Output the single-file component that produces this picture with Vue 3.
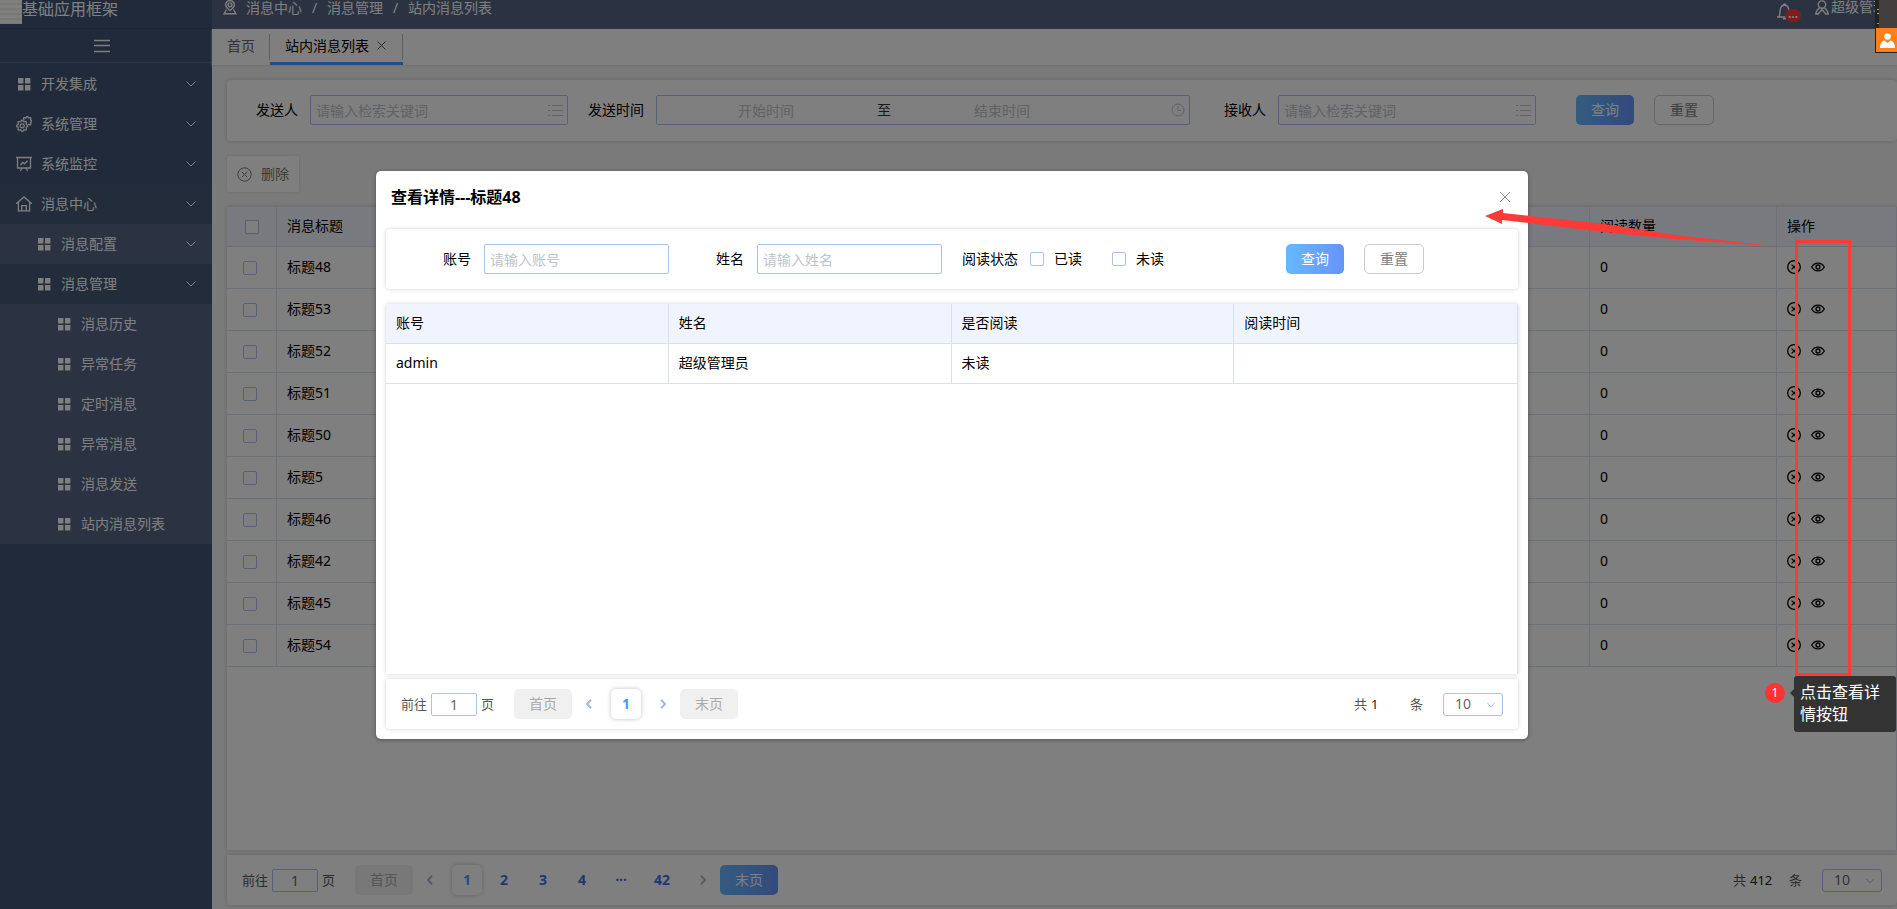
<script setup>
import { ref } from 'vue'

const menu = [
  { label: '开发集成', icon: 'grid', level: 1, arrow: true },
  { label: '系统管理', icon: 'gear', level: 1, arrow: true },
  { label: '系统监控', icon: 'board', level: 1, arrow: true },
  { label: '消息中心', icon: 'home', level: 1, arrow: true, open: true },
  { label: '消息配置', icon: 'grid', level: 2, arrow: true },
  { label: '消息管理', icon: 'grid', level: 2, arrow: true, open: true },
  { label: '消息历史', icon: 'grid', level: 3 },
  { label: '异常任务', icon: 'grid', level: 3 },
  { label: '定时消息', icon: 'grid', level: 3 },
  { label: '异常消息', icon: 'grid', level: 3 },
  { label: '消息发送', icon: 'grid', level: 3 },
  { label: '站内消息列表', icon: 'grid', level: 3 },
]
const rows = ['标题48', '标题53', '标题52', '标题51', '标题50', '标题5', '标题46', '标题42', '标题45', '标题54']
const pages = ['2', '3', '4', '···', '42']
const jump = ref('1')
const dialogJump = ref('1')

// Outline of a rounded cog, from one angle to another (degrees)
function cog(cx, cy, r, from, to) {
  const pts = []
  for (let a = from; a <= to; a += 5) {
    const t = (a * Math.PI) / 180
    const d = r + 0.7 * Math.cos(8 * t)
    pts.push(`${(cx + d * Math.cos(t)).toFixed(2)} ${(cy + d * Math.sin(t)).toFixed(2)}`)
  }
  return 'M' + pts.join('L')
}
const frontCog = cog(6.2, 9.8, 5, 0, 360)
const backCog = cog(11.2, 5.2, 4.2, -165, 75)
</script>

<template>
  <div class="app">
    <aside class="sidebar">
      <div class="brand"><span class="logo"></span><span>基础应用框架</span></div>
      <button class="fold" aria-label="折叠菜单">
        <svg width="16" height="14" viewBox="0 0 16 14"><path d="M0 1.500h16M0 6.500h16M0 12.500h16" /></svg>
      </button>
      <nav>
        <a v-for="m in menu" :key="m.label" href="#" class="item" :class="['lv' + m.level, { open: m.open }]">
          <svg v-if="m.icon === 'grid'" class="mi" viewBox="0 0 16 16"><path class="solid" d="M2 2h5.400v5.400H2zM9 2h5.400v5.400H9zM2 9h5.400v5.400H2zM9 9h5.400v5.400H9z" /></svg>
          <svg v-else-if="m.icon === 'gear'" class="mi" viewBox="0 0 16 16"><path :d="frontCog" /><circle cx="6.200" cy="9.800" r="2" /><path :d="backCog" /></svg>
          <svg v-else-if="m.icon === 'board'" class="mi" viewBox="0 0 16 16"><path d="M0 1.500h16M1.500 1.500v10.500h13V1.500M4.500 9l2.300-2.500 1.700 1.300L11.600 4.700M6.300 12l-2 3M9.700 12l2 3" /></svg>
          <svg v-else class="mi" viewBox="0 0 16 16"><path d="M0 7.800L8 .9l8 6.900M2.400 6.300v8.600h11.200V6.300M5.700 14.700V9.600h4.600v5.100" /></svg>
          <span class="txt">{{ m.label }}</span>
          <svg v-if="m.arrow" class="caret" width="10" height="6" viewBox="0 0 10 6"><path d="M.5.500L5 5l4.500-4.500" /></svg>
        </a>
      </nav>
    </aside>

    <div class="main">
      <header class="top">
        <svg class="pin" width="14" height="15" viewBox="0 0 14 15"><circle cx="7" cy="4.800" r="1.900" /><path d="M7 10.500C4.500 8.600 2.700 6.900 2.700 4.800a4.300 4.300 0 0 1 8.600 0c0 2.100-1.800 3.800-4.300 5.700zM3.500 9.500L1 13.800h12l-2.500-4.300" /></svg>
        <span>消息中心</span><i>/</i><span>消息管理</span><i>/</i><span>站内消息列表</span>
        <div class="user">
          <button class="bell" aria-label="通知">
            <svg width="15" height="17" viewBox="0 0 15 17"><path d="M0 14h13M2 14c1-2 .8-4.500 1.200-7C3.600 4.200 5 2.300 7.500 2.300s4 1.900 4.300 4.700c.2 2 0 4.500 1.200 7M6.300 2.300c0-1.700 2.400-1.700 2.400 0M6 15.700h3" /></svg>
            <b>...</b>
          </button>
          <svg class="avatar" width="14" height="15" viewBox="0 0 14 15"><circle cx="7" cy="4.600" r="3.700" /><path d="M4.500 8C2.300 9.500 1 11.500.8 14h2.400L7 9.500l3.800 4.500h2.400C13 11.500 11.700 9.500 9.500 8" /></svg>
          <span>超级管理员</span>
        </div>
      </header>

      <nav class="tabs">
        <a href="#">首页</a>
        <a href="#" class="on">站内消息列表
          <svg width="9" height="9" viewBox="0 0 9 9"><path d="M.5.500l8 8M8.500.500l-8 8" /></svg>
        </a>
      </nav>

      <form class="card search" @submit.prevent>
        <label for="sender">发送人</label>
        <div class="field w1"><input id="sender" placeholder="请输入检索关键词" /><svg width="15" height="13" viewBox="0 0 15 13"><path d="M4 1.500h11M4 6.500h11M4 11.500h11M0 1.500h2M0 6.500h2M0 11.500h2" /></svg></div>
        <label for="start" class="ml">发送时间</label>
        <div class="field range"><input id="start" placeholder="开始时间" /><span>至</span><input aria-label="结束时间" placeholder="结束时间" /><svg width="14" height="14" viewBox="0 0 14 14"><circle cx="7" cy="7" r="6" /><path d="M7 3v4.500h3" /></svg></div>
        <label for="receiver" class="ml wide">接收人</label>
        <div class="field w1"><input id="receiver" placeholder="请输入检索关键词" /><svg width="15" height="13" viewBox="0 0 15 13"><path d="M4 1.500h11M4 6.500h11M4 11.500h11M0 1.500h2M0 6.500h2M0 11.500h2" /></svg></div>
        <button class="btn primary q">查询</button><button class="btn plain" type="reset">重置</button>
      </form>

      <button class="del">
        <svg width="15" height="15" viewBox="0 0 15 15"><circle cx="7.500" cy="7.500" r="6.700" /><path d="M4.800 4.800l5.400 5.400M10.200 4.800l-5.400 5.400" /></svg>删除
      </button>

      <section class="panel list">
        <table>
          <colgroup><col class="c-check" /><col /><col class="c-count" /><col class="c-op" /></colgroup>
          <thead><tr><th class="ck head"><input type="checkbox" aria-label="全选" /></th><th>消息标题</th><th>阅读数量</th><th>操作</th></tr></thead>
          <tbody>
            <tr v-for="r in rows" :key="r">
              <td class="ck"><input type="checkbox" :aria-label="r" /></td>
              <td>{{ r }}</td>
              <td>0</td>
              <td>
                <div class="ops">
                  <button aria-label="删除"><svg width="14" height="14" viewBox="0 0 14 14"><circle cx="7" cy="7" r="6.300" /><path d="M4.600 4.600l4.800 4.800M9.400 4.600L4.600 9.400" /></svg></button>
                  <button aria-label="查看"><svg width="14" height="14" viewBox="0 0 14 14"><path d="M.7 7C3.500 1.800 10.500 1.800 13.300 7 10.500 12.200 3.500 12.200.7 7z" /><circle cx="7" cy="7" r="2" /></svg></button>
                </div>
              </td>
            </tr>
          </tbody>
        </table>
      </section>

      <footer class="pager">
        <label for="jump">前往</label><input id="jump" v-model="jump" /><span>页</span>
        <button class="btn off first">首页</button>
        <button class="step" aria-label="上一页"><svg width="6" height="10" viewBox="0 0 6 10"><path d="M5 .8L1 5l4 4.200" /></svg></button>
        <button class="num on">1</button>
        <button v-for="p in pages" :key="p" class="num" :class="{ last: p === '42' }">{{ p }}</button>
        <button class="step" aria-label="下一页"><svg width="6" height="10" viewBox="0 0 6 10"><path d="M1 .8L5 5 1 9.200" /></svg></button>
        <button class="btn primary">末页</button>
        <div class="total"><span>共</span><em>412</em><span>条</span></div>
        <div class="size"><select aria-label="每页条数"><option>10</option></select><svg width="8" height="6" viewBox="0 0 8 6"><path d="M.5 1L4 5l3.500-4" /></svg></div>
      </footer>
    </div>

    <div class="mask">
      <section class="dialog" role="dialog" aria-labelledby="dlg-title">
        <header class="dhead">
          <h2 id="dlg-title">查看详情---标题48</h2>
          <button aria-label="关闭"><svg width="12" height="12" viewBox="0 0 12 12"><path d="M1 1l10 10M11 1L1 11" /></svg></button>
        </header>
        <form class="card dsearch" @submit.prevent>
          <label for="acc">账号</label><div class="field"><input id="acc" placeholder="请输入账号" /></div>
          <label for="nm" class="second">姓名</label><div class="field"><input id="nm" placeholder="请输入姓名" /></div>
          <span class="state">阅读状态</span>
          <label class="tick"><input type="checkbox" />已读</label>
          <label class="tick"><input type="checkbox" />未读</label>
          <button class="btn primary q">查询</button><button class="btn plain" type="reset">重置</button>
        </form>
        <div class="panel detail">
          <table>
            <thead><tr><th>账号</th><th>姓名</th><th>是否阅读</th><th>阅读时间</th></tr></thead>
            <tbody><tr><td>admin</td><td>超级管理员</td><td>未读</td><td></td></tr></tbody>
          </table>
        </div>
        <footer class="pager">
          <label for="djump">前往</label><input id="djump" v-model="dialogJump" /><span>页</span>
          <button class="btn off first">首页</button>
          <button class="step" aria-label="上一页"><svg width="6" height="10" viewBox="0 0 6 10"><path d="M5 .8L1 5l4 4.200" /></svg></button>
          <button class="num on">1</button>
          <button class="step" aria-label="下一页"><svg width="6" height="10" viewBox="0 0 6 10"><path d="M1 .8L5 5 1 9.200" /></svg></button>
          <button class="btn off">末页</button>
          <div class="total"><span>共</span><em>1</em><span>条</span></div>
          <div class="size"><select aria-label="每页条数"><option>10</option></select><svg width="8" height="6" viewBox="0 0 8 6"><path d="M.5 1L4 5l3.500-4" /></svg></div>
        </footer>
      </section>
    </div>

    <div class="frame"></div>
    <svg class="arrow" width="294" height="42" viewBox="0 0 294 42"><path d="M0 8L18 1v4L120 16 190 27 292 38.500 188 31 118 24 17 12v4z" /></svg>
    <span class="badge">1</span>
    <div class="tip">点击查看详情按钮</div>
    <div class="widget">
      <div class="shade"><i></i></div>
      <div class="person"><svg width="15" height="15" viewBox="0 0 15 15"><circle cx="7.500" cy="3.500" r="3.300" /><path d="M0 15c0-4.500 2-6.800 4.500-7.500L7.500 10l3-2.500C13 8.200 15 10.500 15 15z" /></svg></div>
    </div>
  </div>
</template>

<style>
html, body { margin: 0; }
body { overflow: hidden; }
</style>

<style scoped>
* { box-sizing: border-box; }
.app { position: relative; display: flex; height: 100vh; overflow: hidden; font: 14px/20px "Noto Sans", "Noto Sans CJK SC", sans-serif; color: #000; background: #f4f4f4; }
button, input, select { font: inherit; margin: 0; padding: 0; border: 0; background: none; color: inherit; }
a { color: inherit; text-decoration: none; }
svg { display: block; flex: none; fill: none; stroke: currentColor; stroke-width: 1; }

.sidebar { flex: 0 0 212px; background: #405475; color: #fff; }
.brand { display: flex; height: 29px; font-size: 16px; line-height: 18px; border-bottom: 1px solid #384b69; }
.logo { width: 22px; height: 24px; background: repeating-linear-gradient(#fff 0 3px, #f0f0ec 3px 5px); }
.fold { display: flex; width: 100%; height: 34px; align-items: center; justify-content: center; padding-right: 8px; border-bottom: 1px solid #536789; }
.fold svg { stroke-width: 1.4; }
.item { display: flex; align-items: center; height: 40px; padding: 0 16px; }
.sidebar nav { padding-top: 1px; }
.item .mi { width: 16px; height: 16px; margin-right: 9px; stroke-width: 1.3; }
.mi .solid { fill: #fff; stroke: none; }
.item.lv2 { padding-left: 36px; background: #566484; }
.item.lv3 { padding-left: 56px; background: #566484; }
.item.open { background: #465876; }
.caret { margin-left: auto; }

.main { flex: 1; min-width: 0; display: flex; flex-direction: column; }
.top { display: flex; align-items: flex-start; height: 29px; padding-left: 11px; background: #566684; color: #fff; line-height: 16px; flex: none; }
.top svg { stroke-width: 1.4; }
.top i { width: 25px; text-align: center; font-style: normal; }
.pin { margin-right: 9px; }
.user { margin-left: auto; display: flex; width: 120px; overflow: hidden; white-space: nowrap; height: 29px; line-height: 13px; }
.user > span { flex: none; }
.bell { position: relative; width: 24px; height: 22px; flex: none; margin-right: 14px; }
.bell b { position: absolute; left: 8px; top: 9px; width: 16px; height: 13px; border-radius: 7px; background: #f83c3c; font-size: 12px; line-height: 9px; }
.avatar { margin-right: 2px; }
.tabs { display: flex; height: 36px; flex: none; background: #fff; box-shadow: 0 1px 2px #ddd; line-height: 34px; }
.tabs a { display: flex; align-items: center; padding: 0 15px; color: #666; border-bottom: 3px solid transparent; background: linear-gradient(#bbb, #bbb) right 5px / 1px 26px no-repeat; }
.tabs a.on { gap: 8px; padding-right: 17px; color: #000; border-bottom-color: #409eff; }
.tabs svg { color: #555; }

.card { display: flex; align-items: center; height: 61px; background: #fff; border-radius: 4px; box-shadow: 0 0 4px rgba(0, 0, 0, .18); }
.search { margin: 15px 0 15px 15px; padding: 0 183px 1px 29px; flex: none; }
.card label, .state { flex: none; }
.search label { margin-right: 12px; }
.search .ml { margin-left: 20px; }
.search .wide { margin-left: 34px; }
.field { display: flex; align-items: center; height: 30px; border: 1px solid #adc0ec; border-radius: 2px; color: #c0c4cc; }
.field input { flex: 1; min-width: 0; height: 28px; padding-left: 5px; color: #333; outline: none; }
.field input::placeholder { color: #c0c4cc; opacity: 1; }
.field svg { margin-right: 4px; }
.w1 { flex: 258 1 0; min-width: 0; }
.range { flex: 536 1 0; min-width: 0; }
.range input { flex: 216; padding: 0; text-align: center; }
.range span { width: 18px; text-align: center; color: #333; }
.range svg { margin: 0 4px 0 60px; }
.btn { flex: none; width: 58px; height: 30px; border-radius: 5px; }
.primary { color: #fff; background: linear-gradient(90deg, #66b8ff, #6694f8); }
.plain { width: 60px; margin-left: 20px; border: 1px solid #ccc; color: #7c7f86; }
.off { background: #f0f0f0; color: #aaa; }
.search .q { margin-left: 40px; }
.del { display: flex; align-items: center; align-self: flex-start; flex: none; gap: 9px; height: 36px; margin: 0 0 15px 15px; padding: 0 10px; background: #fff; color: #777; border-radius: 2px; box-shadow: 0 0 3px rgba(0, 0, 0, .12); }

.panel { background: #fff; box-shadow: 0 0 4px rgba(0, 0, 0, .18); border-right: 1px solid #d8e0ee; }
.list { flex: 1; min-height: 0; margin-left: 15px; }
table { width: 100%; border-collapse: separate; border-spacing: 0; table-layout: fixed; }
th, td { height: 42px; padding: 0 10px 1px; text-align: left; font-weight: 400; border-bottom: 1px solid #d8e0ee; border-right: 1px solid #d8e0ee; }
th:last-child, td:last-child { border-right: 0; }
th { height: 40px; background: #f0f4ff; }
.c-check { width: 50px; } .c-count { width: 187px; } .c-op { width: 119px; }
input[type=checkbox] { appearance: none; display: block; flex: none; width: 14px; height: 14px; border: 1px solid #adc0ec; border-radius: 2px; background: #fff; }
.ck { padding: 0 0 0 16px; }
.ck.head { padding-left: 18px; }
.ops { display: flex; gap: 10px; }
.ops svg { stroke-width: 1.3; }

.pager { display: flex; align-items: center; flex: none; height: 50px; padding: 0 15px; background: #fff; color: #555; border-radius: 0 0 4px 4px; box-shadow: 0 0 4px rgba(0, 0, 0, .18); }
.main .pager { margin: 5px 0 4px 15px; }
.pager input { width: 46px; height: 23px; margin: 0 4px; border: 1px solid #adc0ec; border-radius: 2px; text-align: center; color: #666; }
.pager label, .pager > span { font-size: 13px; }
.first { margin-left: 20px; }
.step { display: flex; align-items: center; justify-content: center; width: 34px; height: 30px; color: #a8b8dc; }
.step svg { stroke-width: 2; }
.num { width: 34px; height: 30px; margin-right: 5px; font-weight: 700; color: #4070e0; }
.num.on { width: 30px; margin-left: 5px; color: #409eff; border-radius: 5px; box-shadow: 0 0 4px rgba(0, 0, 0, .25); }
.num.last { width: 38px; }
.total { display: flex; align-items: center; margin-left: auto; font-size: 13px; }
.total em { min-width: 39px; margin-left: 4px; font-style: normal; color: #222; }
.size { position: relative; width: 60px; margin-left: 20px; }
.size select { appearance: none; display: block; width: 60px; height: 23px; padding-left: 11px; border: 1px solid #adc0ec; border-radius: 3px; color: #666; }
.size svg { position: absolute; right: 8px; top: 9px; color: #adc0ec; }

.mask { position: absolute; inset: 0; padding: 171px 369px 0 376px; background: rgba(0, 0, 0, .5); }
.dialog { padding: 0 10px 10px; background: #fff; border-radius: 5px; box-shadow: 0 1px 4px rgba(0, 0, 0, .35); }
.dhead { display: flex; align-items: center; justify-content: space-between; height: 53px; margin-bottom: 5px; padding: 0 7px 2px 5px; }
.dhead h2 { margin: 0; font-size: 16px; line-height: 24px; font-weight: 700; }
.dhead button { color: #8c8f96; }
.dsearch { height: 60px; margin-bottom: 15px; padding: 0 94px 0 57px; }
.dsearch .field { flex: 0 1 185px; min-width: 0; margin-left: 13px; }
.second { margin-left: 47px; }
.state { margin: 0 12px 0 20px; }
.tick { display: flex; align-items: center; gap: 10px; margin-right: 30px; }
.dsearch .q { margin-left: auto; }
.detail { min-height: 370px; margin-bottom: 5px; }
.detail th, .detail td { height: 40px; }

.frame { position: absolute; right: 46px; top: 240px; width: 56px; height: 436px; border: 3px solid #fc3a38; }
.arrow { position: absolute; right: 118px; top: 208px; fill: #fc3a38; stroke: none; }
.badge { position: absolute; right: 112px; top: 683px; width: 20px; height: 20px; border-radius: 10px; background: #fc3434; color: #fff; font-size: 12px; text-align: center; }
.tip { position: absolute; right: 1px; top: 676px; width: 102px; padding: 5px 16px 7px 6px; border-radius: 3px; background: #333; color: #fff; font-size: 16px; line-height: 22px; }
.tip::before { content: ""; position: absolute; left: -4px; top: 13px; border: solid transparent; border-width: 4px 4px 4px 0; border-right-color: #333; }
.widget { position: absolute; right: 0; top: 0; width: 22px; }
.shade { height: 28px; padding-left: 1px; background: linear-gradient(90deg, #222 0 4px, #443f3f 4px); }
.shade i { display: block; width: 2px; height: 26px; margin-left: 1px; background: repeating-linear-gradient(#222 0 9px, #b0a050 9px 10px, #222 10px 13px, #aaa 13px 14px); }
.person { display: flex; align-items: center; justify-content: flex-end; height: 25px; padding-right: 2px; background: #ff7f1a; border: solid #222; border-width: 0 0 1px 1px; }
.person svg { fill: #fff; stroke: none; }
</style>
